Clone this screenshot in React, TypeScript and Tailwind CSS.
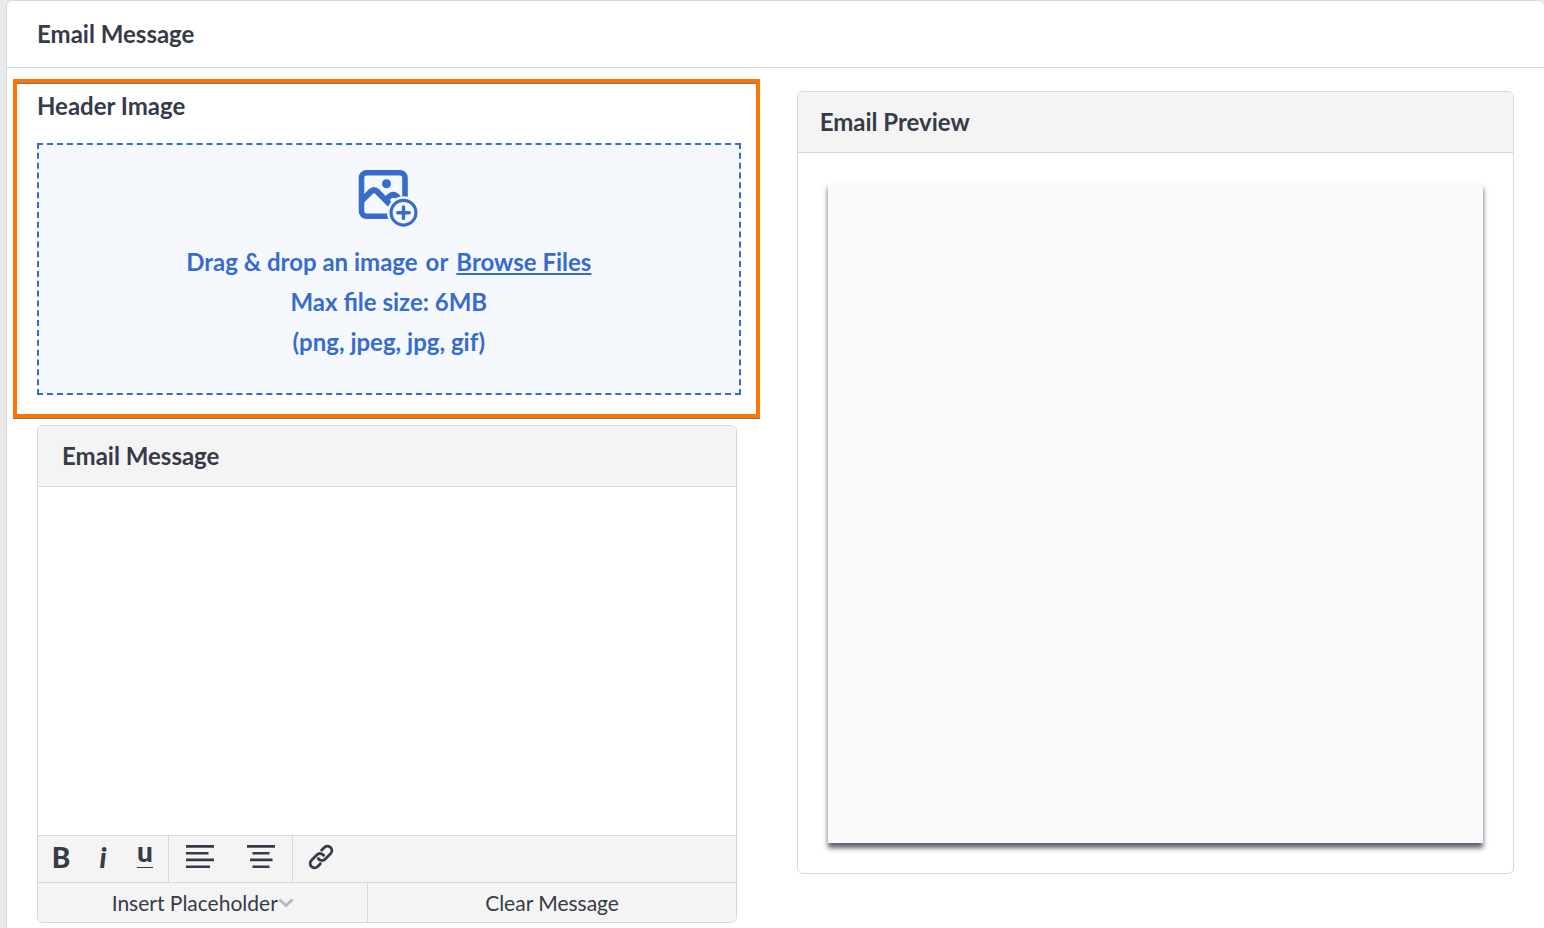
import { useState } from 'react'

const TOOL_BUTTON = 'flex h-full items-center justify-center text-[#363b49] hover:bg-gray-200'
const PANEL_TITLE = 'border-b border-[#d6d7d8] bg-[#f4f4f4] py-[14px] text-2xl leading-8 font-bold'

function AddImageIcon() {
  return (
    <svg width="62" height="58" viewBox="0 0 62 58" fill="none" stroke="#386ccb" aria-hidden="true">
      <rect x="3.5" y="3.8" width="43.5" height="43.5" rx="5" strokeWidth="5.6" />
      <path d="M3.5 32 L12.5 22.8 Q16 19.5 19.5 22.8 L33 36.5" strokeWidth="6" />
      <path d="M28.5 30.5 Q34 23.5 38.5 27 L43 31.5" strokeWidth="5.8" />
      <circle cx="28.5" cy="14.7" r="4.5" fill="#386ccb" stroke="none" />
      <circle cx="45.5" cy="43.7" r="16.5" fill="#f5f9fe" stroke="none" />
      <circle cx="45.5" cy="43.7" r="12.4" strokeWidth="3.2" />
      <path d="M45.5 38 V49.4 M39.8 43.7 H51.2" strokeWidth="3.4" strokeLinecap="round" />
    </svg>
  )
}

function AlignLeftIcon() {
  return (
    <svg width="28" height="24" viewBox="0 0 28 24" fill="currentColor" aria-hidden="true">
      <path d="M0 0h28v2.8H0z M0 7h22.5v2.6H0z M0 13.5h28v2.7H0z M0 20.5h24v2.6H0z" />
    </svg>
  )
}

function AlignCenterIcon() {
  return (
    <svg width="28" height="24" viewBox="0 0 28 24" fill="currentColor" aria-hidden="true">
      <path d="M0 0h28v2.8H0z M5.5 7h17v2.6H5.5z M3 13.5h22.5v2.7H3z M5.5 20.5h17v2.6H5.5z" />
    </svg>
  )
}

function LinkIcon() {
  return (
    <svg
      width="26"
      height="26"
      viewBox="0 0 26 26"
      fill="none"
      stroke="currentColor"
      strokeWidth="2.8"
      strokeLinecap="round"
      aria-hidden="true"
    >
      <path d="M13.6 6.2 L16.6 3.2 A4.4 4.4 0 0 1 22.8 9.4 L17 15.2 A4.4 4.4 0 0 1 10.3 14.6" />
      <path d="M12.4 19.8 L9.4 22.8 A4.4 4.4 0 0 1 3.2 16.6 L9 10.8 A4.4 4.4 0 0 1 15.7 11.4" />
    </svg>
  )
}

export default function App() {
  const [message, setMessage] = useState('')

  return (
    <div className="flex min-h-screen flex-col bg-[#e9eaeb] pl-[6px] font-['Lato',sans-serif] text-[#363b49]">
      <main className="flex-1 rounded-t-md border-t border-l border-[#d6d7d8] bg-white">
        <header className="border-b border-[#d6d7d8] px-[30px] py-[17px]">
          <h1 className="text-2xl leading-8 font-bold">Email Message</h1>
        </header>

        <div className="grid grid-cols-[51fr_49fr] items-start gap-[37px] pr-[30px] pb-[5px] pl-[6px]">
          <div className="pt-[11px]">
            {/* Header image */}
            <section className="border-4 border-[#ff7300] pt-[7px] pr-[15px] pb-[19px] pl-[20px] shadow-[0_1px_0_#777,inset_0_1px_0_#777]">
              <h2 className="mb-[21px] text-2xl leading-8 font-bold">Header Image</h2>
              <div className="flex flex-col items-center border-2 border-dashed border-[#386ccb] bg-[#f5f9fe] pt-[24px] pb-[31px] text-2xl leading-10 font-bold text-[#386ccb]">
                <AddImageIcon />
                <p className="mt-[15px] flex gap-2">
                  <span>Drag &amp; drop an image</span>
                  <span>or</span>
                  <button type="button" className="cursor-pointer underline">Browse Files</button>
                </p>
                <p>Max file size: 6MB</p>
                <p>(png, jpeg, jpg, gif)</p>
              </div>
            </section>

            {/* Message editor */}
            <section className="mt-[7px] mr-[23px] ml-[24px] overflow-hidden rounded-md border border-[#d6d7d8]">
              <h2 className={`${PANEL_TITLE} px-6`}>Email Message</h2>
              <textarea
                aria-label="Email Message"
                value={message}
                onChange={(e) => setMessage(e.target.value)}
                className="block h-[348px] w-full resize-none px-6 py-4 text-xl outline-none"
              />
              <div className="flex h-12 border-y border-[#d6d7d8] bg-[#f4f4f4]">
                <div className="flex border-r border-[#d6d7d8] px-[2px]">
                  <button type="button" aria-label="Bold" className={`${TOOL_BUTTON} w-[42px] pb-1 text-[28px] font-black`}>B</button>
                  <button type="button" aria-label="Italic" className={`${TOOL_BUTTON} w-[42px] pb-1 text-[28px] font-black italic`}>i</button>
                  <button type="button" aria-label="Underline" className={`${TOOL_BUTTON} w-[42px] pb-3`}>
                    <span className="border-b border-[#363b49] pb-1 text-[28px] leading-6 font-black">u</span>
                  </button>
                </div>
                <div className="flex w-31 border-r border-[#d6d7d8]">
                  <button type="button" aria-label="Align left" className={`${TOOL_BUTTON} flex-1 pb-1`}><AlignLeftIcon /></button>
                  <button type="button" aria-label="Align center" className={`${TOOL_BUTTON} flex-1 pb-1`}><AlignCenterIcon /></button>
                </div>
                <button type="button" aria-label="Insert link" className={`${TOOL_BUTTON} w-14 pb-1`}><LinkIcon /></button>
              </div>
              <div className="grid h-[39px] grid-cols-[9fr_10fr] bg-[#f4f4f4] text-[21px]">
                <button type="button" className="flex items-center justify-center border-r border-[#d6d7d8] hover:bg-gray-200">
                  Insert Placeholder
                  <svg width="16" height="10" viewBox="0 0 16 10" fill="none" stroke="#b5b7bc" strokeWidth="2.8" aria-hidden="true">
                    <path d="M1.5 1.5 L8 7.5 L14.5 1.5" />
                  </svg>
                </button>
                <button type="button" className="hover:bg-gray-200">Clear Message</button>
              </div>
            </section>
          </div>

          {/* Preview */}
          <section className="mt-[23px] overflow-hidden rounded-md border border-[#d6d7d8]">
            <h2 className={`${PANEL_TITLE} px-[22px]`}>Email Preview</h2>
            <div className="p-[30px]">
              <div className="h-[660px] bg-[#fafafa] shadow-[0_5px_5px_#5b626d]" />
            </div>
          </section>
        </div>
      </main>
    </div>
  )
}
